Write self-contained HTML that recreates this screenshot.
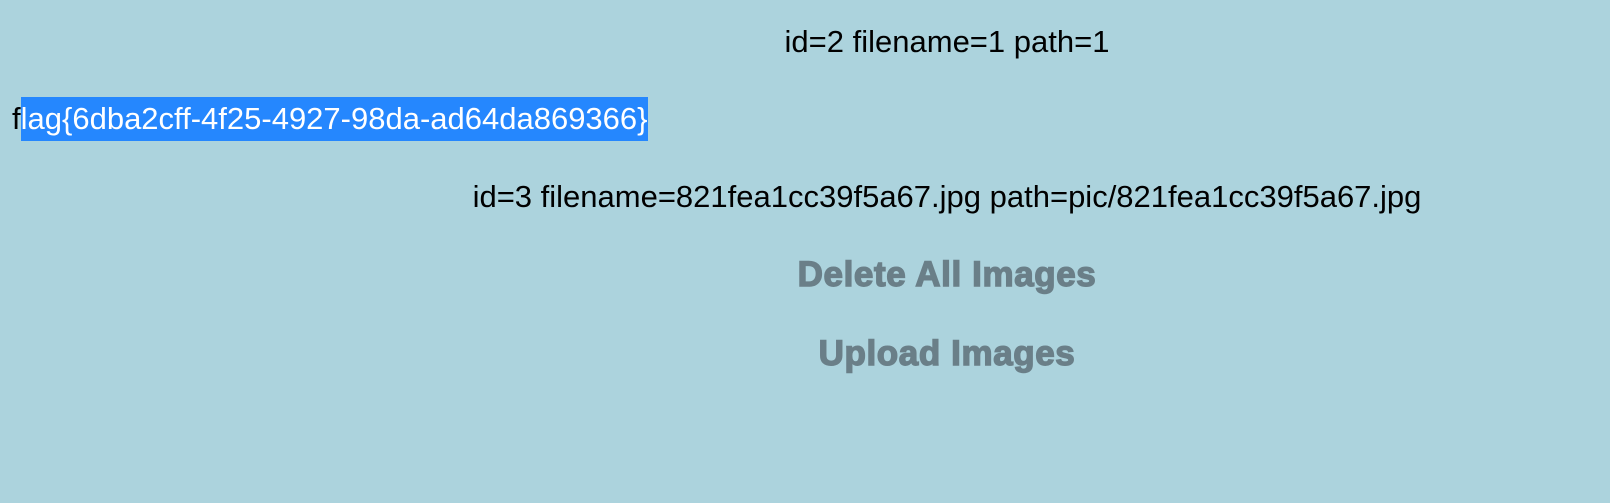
<!DOCTYPE html>
<html><head><style>
html,body{margin:0;padding:0;background:#acd3dd;width:1610px;height:503px;overflow:hidden;font-family:"Liberation Sans",Arial,sans-serif;}
.c{position:absolute;left:259px;width:1376px;text-align:center;font-size:31px;line-height:36px;color:#000;white-space:nowrap;}
.b{font-weight:bold;color:#6a7f88;font-size:35px;line-height:40px;-webkit-text-stroke:1.4px #6a7f88;letter-spacing:0.6px;}
.flag{position:absolute;left:12px;top:97px;font-size:31px;white-space:nowrap;line-height:44px;}
.sel{background:#2587fe;color:#fff;display:inline-block;height:44px;line-height:44px;}
</style></head><body>
<div class="c" style="top:24px">id=2 filename=1 path=1</div>
<div class="flag">f<span class="sel">lag{6dba2cff-4f25-4927-98da-ad64da869366}</span></div>
<div class="c" style="top:179px">id=3 filename=821fea1cc39f5a67.jpg path=pic/821fea1cc39f5a67.jpg</div>
<div class="c b" style="top:255px">Delete All Images</div>
<div class="c b" style="top:334px">Upload Images</div>
</body></html>
